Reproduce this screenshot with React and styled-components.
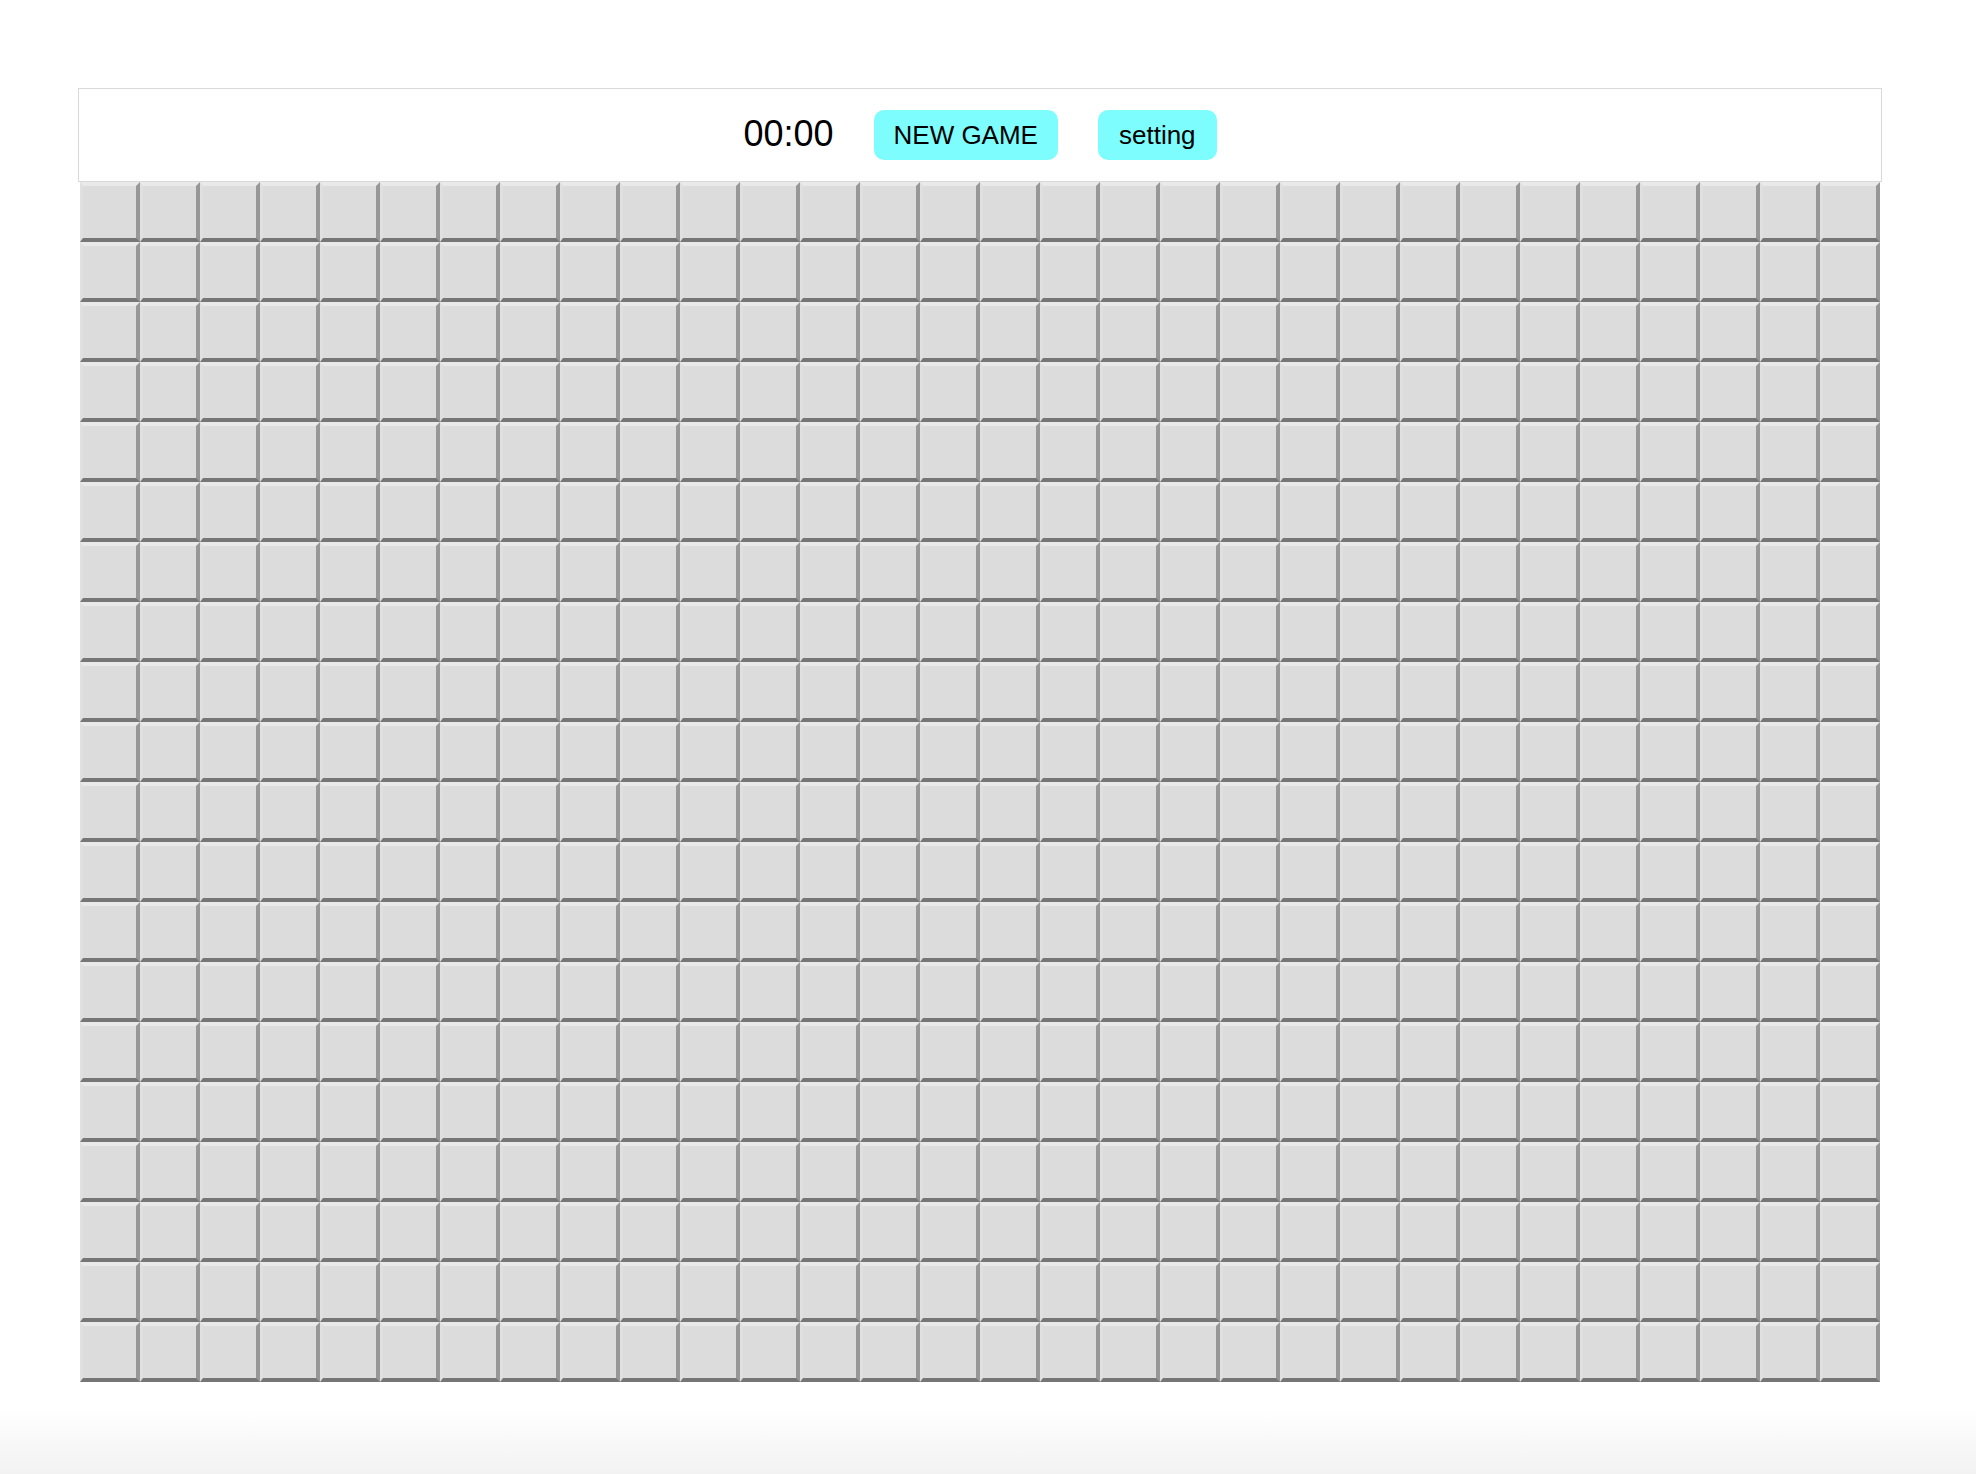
import React from "react";
import styled, { createGlobalStyle } from "styled-components";

const COLS = 30;
const ROWS = 20;

const GlobalStyle = createGlobalStyle`
  html {
    min-height: 100%;
    background: linear-gradient(to bottom, #fff calc(100% - 66px), #f2f2f2 100%);
  }
  body {
    margin: 0;
    font-family: "Liberation Sans", Arial, sans-serif;
  }
`;

const Page = styled.div`
  padding: 88px 0 0 78px;
`;

const Game = styled.div`
  width: 1804px;
`;

const Toolbar = styled.div`
  align-items: center;
  border: 1px solid #d9d9d9;
  box-sizing: border-box;
  display: flex;
  gap: 40px;
  height: 94px;
  justify-content: center;
`;

const Timer = styled.span`
  color: #000;
  font-size: 36px;
  margin-top: -2px;
`;

const Button = styled.button`
  background-color: #7dfdfe;
  border: none;
  border-radius: 10px;
  color: #000;
  cursor: pointer;
  font-family: "Liberation Sans", Arial, sans-serif;
  font-size: 26px;
  height: 50px;
  padding: 0 ${({ upper }) => (upper ? "20px" : "21px")};
`;

const Board = styled.div`
  display: grid;
  grid-template-columns: repeat(${COLS}, 60px);
  grid-auto-rows: 60px;
  margin: 0 2px;
`;

const Cell = styled.div`
  background-color: #dcdcdc;
  border-style: solid;
  border-width: 4px 4px 4px 3px;
  border-color: #e9e9e9 #979797 #767676 #e0e0e0;
  box-sizing: border-box;
`;

export default function App() {
  const cells = Array.from({ length: COLS * ROWS }, (_, i) => i);

  return (
    <>
      <GlobalStyle />
      <Page>
        <Game>
          <Toolbar>
            <Timer>00:00</Timer>
            <Button upper>NEW GAME</Button>
            <Button>setting</Button>
          </Toolbar>
          <Board>
            {cells.map((i) => (
              <Cell key={i} />
            ))}
          </Board>
        </Game>
      </Page>
    </>
  );
}
